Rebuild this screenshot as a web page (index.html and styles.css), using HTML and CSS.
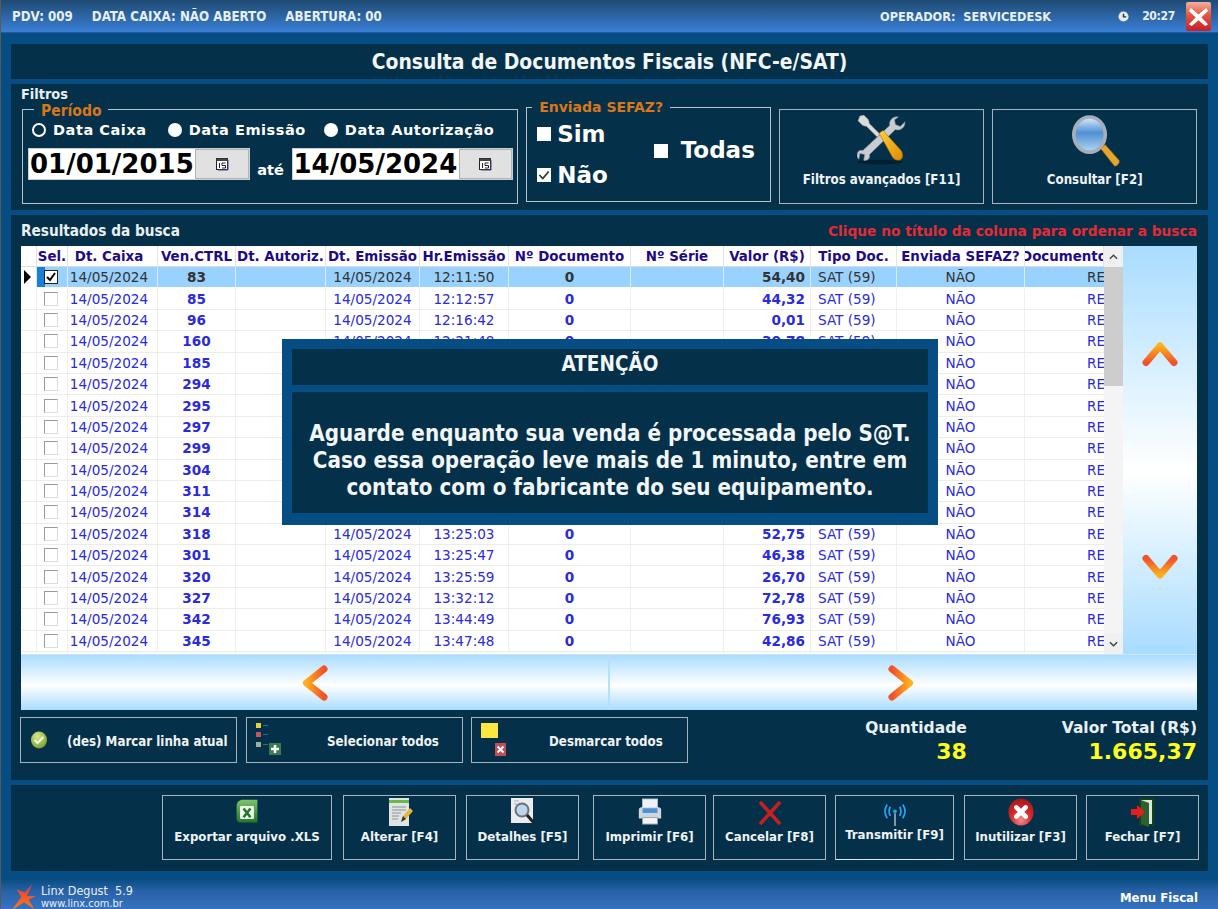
FILE: index.html
```html
<!DOCTYPE html>
<html lang="pt-BR">
<head>
<meta charset="utf-8">
<title>Consulta de Documentos Fiscais</title>
<link rel="stylesheet" href="styles.css">
</head>
<body>
<div class="app">
  <header class="topbar">
    <span class="tb-item">PDV: 009</span>
    <span class="tb-item">DATA CAIXA: NÃO ABERTO</span>
    <span class="tb-item">ABERTURA: 00</span>
    <span class="tb-oper">OPERADOR:&nbsp; SERVICEDESK</span>
    <svg class="tb-clock" viewBox="0 0 12 12"><circle cx="6" cy="6" r="5.5" fill="#e8e8ee"/><path d="M6 3v3.4h3" fill="none" stroke="#24344f" stroke-width="1.6"/></svg>
    <span class="tb-time">20:27</span>
    <button class="tb-close"><svg viewBox="0 0 24 24"><path d="M4 3l8 7 8-7 2 3-7 7 7 7-3 2-7-6-7 6-3-2 7-7-7-7z" fill="#fff"/></svg></button>
  </header>

  <main class="content">
    <section class="panel title-panel"><h1>Consulta de Documentos Fiscais (NFC-e/SAT)</h1></section>

    <section class="panel filters">
      <div class="filters-label">Filtros</div>
      <div class="filters-row">
        <fieldset class="fs fs-period">
          <legend>Período</legend>
          <div class="radios">
            <span class="radio"><i class="dot on"></i>Data Caixa</span>
            <span class="radio"><i class="dot"></i>Data Emissão</span>
            <span class="radio"><i class="dot"></i>Data Autorização</span>
          </div>
          <div class="dates">
            <div class="date"><span class="date-val">01/01/2015</span><span class="date-btn"><svg viewBox="0 0 14 14"><rect x="1.5" y="1.5" width="11" height="11" fill="#fff" stroke="#222"/><rect x="1.5" y="1.5" width="11" height="2.5" fill="#444"/><path d="M4.5 6v5M7 6h3.5M7 6v2.5h3.5V11H7" fill="none" stroke="#222"/><path d="M13 3v10H3" fill="none" stroke="#448"/></svg></span></div>
            <span class="ate">até</span>
            <div class="date"><span class="date-val">14/05/2024</span><span class="date-btn"><svg viewBox="0 0 14 14"><rect x="1.5" y="1.5" width="11" height="11" fill="#fff" stroke="#222"/><rect x="1.5" y="1.5" width="11" height="2.5" fill="#444"/><path d="M4.5 6v5M7 6h3.5M7 6v2.5h3.5V11H7" fill="none" stroke="#222"/><path d="M13 3v10H3" fill="none" stroke="#448"/></svg></span></div>
          </div>
        </fieldset>
        <fieldset class="fs fs-sefaz">
          <legend>Enviada SEFAZ?</legend>
          <div class="sefaz-col">
            <span class="opt"><i class="sq"></i>Sim</span>
            <span class="opt"><i class="sq chk"><svg viewBox="0 0 12 12"><path d="M2 6l3 3 5-6" fill="none" stroke="#333" stroke-width="1.5"/></svg></i>Não</span>
          </div>
          <span class="opt opt-all"><i class="sq"></i>Todas</span>
        </fieldset>
        <button class="fbtn fbtn-a">
          <svg class="ic-tools" viewBox="0 0 52 52">
            <defs><linearGradient id="yel" x1="0" y1="0" x2="1" y2="1"><stop offset="0" stop-color="#ffd23a"/><stop offset="1" stop-color="#e08a00"/></linearGradient></defs>
            <ellipse cx="24" cy="49" rx="24" ry="2.5" fill="#02202f"/>
            <path d="M43 2c-5-1-10 3-9 9L6 37c-3-1-6 1-6 5 0 2 1 3 2 4l1-6 5 1-1 6c4 1 7-2 6-6l27-26c5 2 10-2 10-8l-5 5-5-2-1-5z" fill="#c9ccd0" stroke="#8a8d92" stroke-width=".6"/>
            <path d="M3 1l4-1 5 5 1 4 11 11-3 3L10 12 6 11 1 6z" fill="#d9dbde" stroke="#888" stroke-width=".5"/>
            <path d="M23 19l4-3 18 20c3 3 3 8 1 10s-7 1-9-2z" fill="url(#yel)" stroke="#a86a00" stroke-width=".6"/>
          </svg>
          <span>Filtros avançados [F11]</span>
        </button>
        <button class="fbtn fbtn-b">
          <svg class="ic-search" viewBox="0 0 52 56">
            <defs>
              <linearGradient id="gl" x1="0" y1="0" x2="0" y2="1"><stop offset="0" stop-color="#dff0ff"/><stop offset=".45" stop-color="#4f8fd2"/><stop offset="1" stop-color="#b4d8f2"/></linearGradient>
            </defs>
            <path d="M31 36l5-4 15 17c1 3-3 7-5 6z" fill="#e6a52c" stroke="#a87614" stroke-width=".7"/>
            <ellipse cx="19" cy="21" rx="17" ry="19" fill="url(#gl)" stroke="#a6aeba" stroke-width="4"/>
          </svg>
          <span>Consultar [F2]</span>
        </button>
      </div>
    </section>

    <section class="panel results">
      <div class="res-head">
        <h2>Resultados da busca</h2>
        <span class="res-hint">Clique no título da coluna para ordenar a busca</span>
      </div>
      <div class="res-main">
        <div class="grid">
          <div class="g-row g-head">
            <span></span><span>Sel.</span><span>Dt. Caixa</span><span>Ven.CTRL</span><span>Dt. Autoriz.</span><span>Dt. Emissão</span><span>Hr.Emissão</span><span>Nº Documento</span><span>Nº Série</span><span>Valor (R$)</span><span>Tipo Doc.</span><span>Enviada SEFAZ?</span><span>Documento</span>
          </div>
          <div class="g-row sel"><span class="ptr"><i class="tri"></i></span><span class="c-sel"><i class="cb on"><svg viewBox="0 0 12 12"><path d="M2 6l3 3 5-7" fill="none" stroke="#000" stroke-width="2"/></svg></i></span><span>14/05/2024</span><span class="b">83</span><span></span><span>14/05/2024</span><span>12:11:50</span><span class="b">0</span><span></span><span class="b r">54,40</span><span class="l">SAT (59)</span><span>NÃO</span><span class="d">RE</span></div>
          <div class="g-row"><span></span><span class="c-sel"><i class="cb"></i></span><span>14/05/2024</span><span class="b">85</span><span></span><span>14/05/2024</span><span>12:12:57</span><span class="b">0</span><span></span><span class="b r">44,32</span><span class="l">SAT (59)</span><span>NÃO</span><span class="d">RE</span></div>
          <div class="g-row"><span></span><span class="c-sel"><i class="cb"></i></span><span>14/05/2024</span><span class="b">96</span><span></span><span>14/05/2024</span><span>12:16:42</span><span class="b">0</span><span></span><span class="b r">0,01</span><span class="l">SAT (59)</span><span>NÃO</span><span class="d">RE</span></div>
          <div class="g-row"><span></span><span class="c-sel"><i class="cb"></i></span><span>14/05/2024</span><span class="b">160</span><span></span><span>14/05/2024</span><span>12:21:48</span><span class="b">0</span><span></span><span class="b r">30,78</span><span class="l">SAT (59)</span><span>NÃO</span><span class="d">RE</span></div>
          <div class="g-row"><span></span><span class="c-sel"><i class="cb"></i></span><span>14/05/2024</span><span class="b">185</span><span></span><span></span><span></span><span></span><span></span><span></span><span></span><span>NÃO</span><span class="d">RE</span></div>
          <div class="g-row"><span></span><span class="c-sel"><i class="cb"></i></span><span>14/05/2024</span><span class="b">294</span><span></span><span></span><span></span><span></span><span></span><span></span><span></span><span>NÃO</span><span class="d">RE</span></div>
          <div class="g-row"><span></span><span class="c-sel"><i class="cb"></i></span><span>14/05/2024</span><span class="b">295</span><span></span><span></span><span></span><span></span><span></span><span></span><span></span><span>NÃO</span><span class="d">RE</span></div>
          <div class="g-row"><span></span><span class="c-sel"><i class="cb"></i></span><span>14/05/2024</span><span class="b">297</span><span></span><span></span><span></span><span></span><span></span><span></span><span></span><span>NÃO</span><span class="d">RE</span></div>
          <div class="g-row"><span></span><span class="c-sel"><i class="cb"></i></span><span>14/05/2024</span><span class="b">299</span><span></span><span></span><span></span><span></span><span></span><span></span><span></span><span>NÃO</span><span class="d">RE</span></div>
          <div class="g-row"><span></span><span class="c-sel"><i class="cb"></i></span><span>14/05/2024</span><span class="b">304</span><span></span><span></span><span></span><span></span><span></span><span></span><span></span><span>NÃO</span><span class="d">RE</span></div>
          <div class="g-row"><span></span><span class="c-sel"><i class="cb"></i></span><span>14/05/2024</span><span class="b">311</span><span></span><span></span><span></span><span></span><span></span><span></span><span></span><span>NÃO</span><span class="d">RE</span></div>
          <div class="g-row"><span></span><span class="c-sel"><i class="cb"></i></span><span>14/05/2024</span><span class="b">314</span><span></span><span></span><span></span><span></span><span></span><span></span><span></span><span>NÃO</span><span class="d">RE</span></div>
          <div class="g-row"><span></span><span class="c-sel"><i class="cb"></i></span><span>14/05/2024</span><span class="b">318</span><span></span><span>14/05/2024</span><span>13:25:03</span><span class="b">0</span><span></span><span class="b r">52,75</span><span class="l">SAT (59)</span><span>NÃO</span><span class="d">RE</span></div>
          <div class="g-row"><span></span><span class="c-sel"><i class="cb"></i></span><span>14/05/2024</span><span class="b">301</span><span></span><span>14/05/2024</span><span>13:25:47</span><span class="b">0</span><span></span><span class="b r">46,38</span><span class="l">SAT (59)</span><span>NÃO</span><span class="d">RE</span></div>
          <div class="g-row"><span></span><span class="c-sel"><i class="cb"></i></span><span>14/05/2024</span><span class="b">320</span><span></span><span>14/05/2024</span><span>13:25:59</span><span class="b">0</span><span></span><span class="b r">26,70</span><span class="l">SAT (59)</span><span>NÃO</span><span class="d">RE</span></div>
          <div class="g-row"><span></span><span class="c-sel"><i class="cb"></i></span><span>14/05/2024</span><span class="b">327</span><span></span><span>14/05/2024</span><span>13:32:12</span><span class="b">0</span><span></span><span class="b r">72,78</span><span class="l">SAT (59)</span><span>NÃO</span><span class="d">RE</span></div>
          <div class="g-row"><span></span><span class="c-sel"><i class="cb"></i></span><span>14/05/2024</span><span class="b">342</span><span></span><span>14/05/2024</span><span>13:44:49</span><span class="b">0</span><span></span><span class="b r">76,93</span><span class="l">SAT (59)</span><span>NÃO</span><span class="d">RE</span></div>
          <div class="g-row"><span></span><span class="c-sel"><i class="cb"></i></span><span>14/05/2024</span><span class="b">345</span><span></span><span>14/05/2024</span><span>13:47:48</span><span class="b">0</span><span></span><span class="b r">42,86</span><span class="l">SAT (59)</span><span>NÃO</span><span class="d">RE</span></div>
        </div>
        <div class="scroll">
          <span class="sb-btn"><svg viewBox="0 0 10 6"><path d="M1 5l4-4 4 4" fill="none" stroke="#444" stroke-width="1.6"/></svg></span>
          <span class="sb-thumb"></span>
          <span class="sb-track"></span>
          <span class="sb-btn"><svg viewBox="0 0 10 6"><path d="M1 1l4 4 4-4" fill="none" stroke="#444" stroke-width="1.6"/></svg></span>
        </div>
        <div class="vnav">
          <svg class="arrow" viewBox="0 0 36 26"><defs><linearGradient id="au" x1="0" y1="0" x2="0" y2="1"><stop offset="0" stop-color="#ffb01c"/><stop offset="1" stop-color="#f0522a"/></linearGradient></defs><path d="M4 21.500L18 5l14 16.500" fill="none" stroke="url(#au)" stroke-width="7" stroke-linecap="round" stroke-linejoin="round"/></svg>
          <svg class="arrow" viewBox="0 0 36 26"><defs><linearGradient id="ad" x1="0" y1="1" x2="0" y2="0"><stop offset="0" stop-color="#ffb01c"/><stop offset="1" stop-color="#f0522a"/></linearGradient></defs><path d="M4 4.500L18 21 32 4.500" fill="none" stroke="url(#ad)" stroke-width="7" stroke-linecap="round" stroke-linejoin="round"/></svg>
        </div>
      </div>
      <div class="hnav">
        <div class="hnav-cell">
          <svg class="arrow-h" viewBox="0 0 26 36"><defs><linearGradient id="al" x1="0" y1="0" x2="1" y2="0"><stop offset="0" stop-color="#ffb01c"/><stop offset="1" stop-color="#f0522a"/></linearGradient></defs><path d="M22 4L4.500 18 22 32" fill="none" stroke="url(#al)" stroke-width="7" stroke-linecap="round" stroke-linejoin="round"/></svg>
        </div>
        <div class="hnav-cell">
          <svg class="arrow-h" viewBox="0 0 26 36"><defs><linearGradient id="ar" x1="1" y1="0" x2="0" y2="0"><stop offset="0" stop-color="#ffb01c"/><stop offset="1" stop-color="#f0522a"/></linearGradient></defs><path d="M4 4L21.500 18 4 32" fill="none" stroke="url(#ar)" stroke-width="7" stroke-linecap="round" stroke-linejoin="round"/></svg>
        </div>
      </div>
      <div class="res-foot">
        <button class="abtn a1">
          <svg class="ai" viewBox="0 0 20 20"><defs><radialGradient id="gr" cx=".4" cy=".3" r=".8"><stop offset="0" stop-color="#d6e88a"/><stop offset="1" stop-color="#6e9a22"/></radialGradient></defs><ellipse cx="10" cy="10" rx="8" ry="8.500" fill="url(#gr)"/><path d="M5.500 10l3 3 6-6" fill="none" stroke="#f4f8ec" stroke-width="2"/></svg>
          <span>(des) Marcar linha atual</span>
        </button>
        <button class="abtn a2">
          <svg class="ai2" viewBox="0 0 30 36"><rect x="1" y="1" width="5" height="5" fill="#e3d23a"/><rect x="1" y="10" width="5" height="5" fill="#c0565e"/><rect x="1" y="20" width="5" height="5" fill="#9ab09a"/><path d="M8 3.500h5M8 12.500h5M8 22.500h5" stroke="#4b6472" stroke-width="1"/><rect x="14" y="21" width="12" height="12" fill="#3a7a4e"/><path d="M20 23v8M16 27h8" stroke="#fff" stroke-width="2.500"/></svg>
          <span>Selecionar todos</span>
        </button>
        <button class="abtn a3">
          <svg class="ai2" viewBox="0 0 30 36"><rect x="1" y="1" width="17" height="15" fill="#fde640"/><rect x="15" y="21" width="11" height="13" fill="#c84a55"/><path d="M17.500 24.500l6 6M23.500 24.500l-6 6" stroke="#fff" stroke-width="2"/></svg>
          <span>Desmarcar todos</span>
        </button>
        <div class="stat stat-q"><span class="stat-l">Quantidade</span><span class="stat-v">38</span></div>
        <div class="stat stat-t"><span class="stat-l">Valor Total (R$)</span><span class="stat-v">1.665,37</span></div>
      </div>
    </section>

    <section class="panel actions">
      <button class="btn w-xls">
        <svg class="bi" viewBox="0 0 26 30"><defs><linearGradient id="xg" x1="0" y1="0" x2="0" y2="1"><stop offset="0" stop-color="#7cc36a"/><stop offset="1" stop-color="#1f7a26"/></linearGradient></defs><path d="M7 1h18v26H4q-3-1-3-4V7q1-5 6-6z" fill="url(#xg)"/><rect x="5" y="8" width="16" height="15" rx="1" fill="#f2f8ee"/><path d="M9 11l8 10M17 11l-8 10" stroke="#1f7a26" stroke-width="3"/></svg>
        <span>Exportar arquivo .XLS</span>
      </button>
      <button class="btn w-f4">
        <svg class="bi" viewBox="0 0 26 30"><rect x="2" y="1" width="20" height="28" fill="#dfe3e3"/><rect x="2" y="3" width="20" height="3" fill="#6bb84a"/><path d="M5 10h14M5 13h14M5 16h9M5 19h7M5 22h6" stroke="#8a9296"/><path d="M14 25l2-6 7-8 3 3-7 8z" fill="#eeb23a"/><path d="M14 25l2-6 3 3z" fill="#333"/></svg>
        <span>Alterar [F4]</span>
      </button>
      <button class="btn w-f5">
        <svg class="bi" viewBox="0 0 26 30"><rect x="1" y="1" width="22" height="25" fill="#e9edf0"/><path d="M4 4h5M4 7h3" stroke="#aab"/><circle cx="12" cy="13" r="6.500" fill="#bcd6ee" stroke="#6d7278" stroke-width="2"/><path d="M17 18l7 8" stroke="#222" stroke-width="3"/></svg>
        <span>Detalhes [F5]</span>
      </button>
      <button class="btn w-f6">
        <svg class="bi" viewBox="0 0 28 30"><rect x="6" y="1" width="16" height="11" fill="#eef1f5" stroke="#bcc3cc"/><path d="M2 13q0-3 3-3h18q3 0 3 3v9H2z" fill="#cfd6de"/><rect x="6" y="11" width="16" height="5" fill="#4e8fdc"/><rect x="6" y="21" width="16" height="7" fill="#f4f4f4" stroke="#9aa2ab"/></svg>
        <span>Imprimir [F6]</span>
      </button>
      <button class="btn w-f8">
        <svg class="bi" viewBox="0 0 26 30"><path d="M3 5l20 22M23 5L3 27" stroke="#c8201e" stroke-width="3.500"/></svg>
        <span>Cancelar [F8]</span>
      </button>
      <button class="btn w-f9 tx">
        <svg class="bi2" viewBox="0 0 24 26"><path d="M12 11v14" stroke="#b8c8d0" stroke-width="1.500"/><circle cx="12" cy="9" r="2" fill="#24a8f0"/><path d="M7 4q-3 5 0 10M17 4q3 5 0 10M3.500 1.500q-5 7.500 0 15M20.500 1.500q5 7.500 0 15" fill="none" stroke="#24a8f0" stroke-width="1.800"/></svg>
        <span>Transmitir [F9]</span>
      </button>
      <button class="btn w-f3">
        <svg class="bi" viewBox="0 0 28 30"><defs><radialGradient id="rd" cx=".5" cy=".8" r=".8"><stop offset="0" stop-color="#f09090"/><stop offset=".5" stop-color="#d42a2a"/><stop offset="1" stop-color="#a81616"/></radialGradient></defs><ellipse cx="14" cy="15" rx="13.500" ry="14.500" fill="url(#rd)"/><path d="M9 10l10 10M19 10L9 20" stroke="#fff" stroke-width="5" stroke-linecap="round"/></svg>
        <span>Inutilizar [F3]</span>
      </button>
      <button class="btn w-f7">
        <svg class="bi" viewBox="0 0 26 30"><rect x="9" y="1" width="15" height="28" fill="#16401c"/><path d="M11 3h11v24H11z" fill="#dfe6da"/><path d="M11 3l8 3v24l-8-3z" fill="#2e5f2e"/><path d="M1 12h6V8l8 7-8 7v-4H1z" fill="#e81c1c"/></svg>
        <span>Fechar [F7]</span>
      </button>
    </section>
  </main>

  <footer class="bottombar">
    <svg class="logo" viewBox="0 0 26 28"><defs><linearGradient id="lg" x1="0" y1="0" x2="0" y2="1"><stop offset="0" stop-color="#f5303a"/><stop offset="1" stop-color="#f08018"/></linearGradient></defs><path d="M22 0L14 9 5 6l5 8L0 28l13-8 11 7-6-10 8-4H16z" fill="url(#lg)"/></svg>
    <div class="brand"><span class="brand-n">Linx Degust&nbsp; 5.9</span><span class="brand-u">www.linx.com.br</span></div>
    <span class="menu-f">Menu Fiscal</span>
  </footer>

  <div class="modal">
    <div class="modal-title">ATENÇÃO</div>
    <div class="modal-body">Aguarde enquanto sua venda é processada pelo S@T.<br>Caso essa operação leve mais de 1 minuto, entre em<br>contato com o fabricante do seu equipamento.</div>
  </div>
</div>
</body>
</html>
```
FILE: styles.css
```css
* { box-sizing: border-box; }
html, body { margin: 0; padding: 0; }
body { width: 1218px; height: 909px; overflow: hidden; font-family: "DejaVu Sans", Verdana, sans-serif; color: #fff; }
button { font: inherit; color: inherit; background: none; padding: 0; cursor: pointer; }
h1, h2 { margin: 0; }

.app { position: relative; width: 1218px; height: 909px; display: flex; flex-direction: column; background: #054d82; border-left: 1px solid #5a5a5a; }

.topbar { height: 33px; flex: none; display: flex; align-items: center; padding: 0 7px 0 11px; background: linear-gradient(#1e4a72, #2f6aae 60%, #3b7fd6); border-bottom: 1px solid #1e5c9c; font-family: "DejaVu Sans Condensed", "DejaVu Sans", sans-serif; font-weight: 700; font-size: 13.2px; color: #e8f0f6; }
.tb-item { margin-right: 19px; }
.tb-oper { margin-left: auto; margin-right: 67px; font-size: 12.6px; }
.tb-clock { width: 11px; height: 11px; margin-right: 13px; }
.tb-time { margin-right: 11px; font-size: 12px; letter-spacing: -.3px; }
.tb-close { width: 25px; height: 29px; border: 0; border-radius: 2px; background: linear-gradient(#f3b0a0, #e4573f 45%, #c4202a); display: flex; align-items: center; justify-content: center; }
.tb-close svg { width: 23px; height: 23px; }

.content { flex: 1; display: flex; flex-direction: column; gap: 5px; padding: 11px 10px 0 10px; }
.panel { background: #053049; }

.title-panel { height: 35px; flex: none; display: flex; align-items: center; justify-content: center; }
h1 { font-size: 20.9px; font-weight: 700; font-family: "DejaVu Sans Condensed", "DejaVu Sans", sans-serif; color: #f2f6f8; }

.filters { height: 126px; flex: none; padding: 2px 11px 0 11px; }
.filters-label { margin-left: -1px; font-family: "DejaVu Sans Condensed", "DejaVu Sans", sans-serif; font-size: 14.4px; font-weight: 700; line-height: 16px; color: #e8f0f4; }
.filters-row { display: flex; align-items: flex-start; gap: 8px; }
.fs { margin: 0; padding: 0; border: 1px solid #b9c4ca; min-width: 0; }
.fs legend { font-weight: 700; color: #d9761a; }
.fs-period { width: 497px; height: 104px; margin-top: -2px; padding: 0 4px 0 5px; }
.fs-period legend { margin-left: 6px; padding: 4px 7px 0; font-family: "DejaVu Sans Condensed", "DejaVu Sans", sans-serif; font-size: 15.5px; line-height: 15px; }
.radios { display: flex; align-items: center; height: 20px; margin-top: 1px; padding-left: 4px; font-size: 14.5px; font-weight: 700; letter-spacing: .55px; }
.radio { display: flex; align-items: center; gap: 7px; }
.radio:nth-child(2) { margin-left: 21px; }
.radio:nth-child(3) { margin-left: 18px; }
.dot { width: 14px; height: 14px; border-radius: 50%; background: #fff; display: block; }
.dot.on { border: 2.5px solid #fff; background: #053049; }
.dates { display: flex; align-items: flex-end; margin-top: 8px; }
.date { width: 222px; height: 32px; display: flex; align-items: stretch; background: #fff; border: 1px solid #c8ced2; color: #000; }
.date-val { width: 166px; padding-left: 1px; font-size: 26px; line-height: 30px; font-weight: 700; white-space: nowrap; }
.date-btn { flex: 1; display: flex; align-items: center; justify-content: center; background: #e1e1e1; border: 1px solid #b4b4b4; }
.date-btn svg { width: 14px; height: 14px; }
.ate { width: 42px; text-align: center; font-size: 14.5px; font-weight: 700; line-height: 20px; }

.fs-sefaz { width: 245px; height: 102px; margin-top: -2px; padding: 0 0 0 10px; display: flex; align-items: center; }
.fs-sefaz legend { margin-left: -5px; padding: 0 7px; font-size: 14px; line-height: 15px; }
.sefaz-col { display: flex; flex-direction: column; gap: 16px; margin-top: -7px; }
.opt { display: flex; align-items: center; gap: 6px; font-size: 23px; line-height: 25px; font-weight: 700; }
.opt-all { margin-left: 46px; margin-top: -15px; gap: 13px; }
.sq { width: 14px; height: 14px; background: #fff; display: block; }
.sq svg { display: block; width: 14px; height: 14px; }

.fbtn { height: 95px; border: 1px solid #a8b4ba; background: #053049; display: flex; flex-direction: column; align-items: center; justify-content: flex-end; padding-bottom: 16px; font-family: "DejaVu Sans Condensed", "DejaVu Sans", sans-serif; font-weight: 700; font-size: 13.2px; color: #eef3f6; margin-top: 7px; }
.fbtn-a { width: 206px; }
.fbtn-b { width: 205px; }
.ic-tools { width: 50px; height: 50px; margin-bottom: 7px; }
.ic-search { width: 48px; height: 52px; margin-bottom: 5px; margin-left: 2px; }

.results { height: 565px; flex: none; padding: 0 11px 0 10px; display: flex; flex-direction: column; }
.res-head { height: 31px; flex: none; display: flex; align-items: center; justify-content: space-between; padding-top: 1px; }
h2 { font-size: 15.2px; font-weight: 700; font-family: "DejaVu Sans Condensed", "DejaVu Sans", sans-serif; color: #e8f0f4; }
.res-hint { font-size: 13.75px; font-weight: 700; color: #e62a35; }

.res-main { display: flex; height: 408px; flex: none; background: linear-gradient(#a9dcff, #d8f0ff 30%, #fff 55%, #d8f0ff 75%, #a9dcff); }
.grid { width: 1083px; flex: none; background: #fff; font-size: 13.6px; color: #2a2ae0; }
.g-row { display: grid; grid-template-columns: 16px 31px 90px 78px 90px 94px 89px 122px 93px 87px 86px 128px 79px; height: 21.4px; border-bottom: 1px solid #ececec; background: #fff; }
.g-row > span { display: flex; align-items: center; justify-content: center; white-space: nowrap; overflow: hidden; border-right: 1px solid #efefef; min-width: 0; }
.g-row > span:nth-child(3) { padding-right: 7px; }
.g-head { height: 21px; font-weight: 700; color: #1e0a86; font-size: 13.4px; border-bottom: 1px solid #dcdcdc; }
.g-head > span { border-right: 1px solid #e4e4e4; }
.g-row .b { font-weight: 700; }
.g-row .r { justify-content: flex-end; padding-right: 5px; }
.g-row .l { justify-content: flex-start; padding-left: 7px; }
.g-row .d { justify-content: flex-start; padding-left: 62px; border-right: 0; }
.g-row.sel { background: #99d1ff; color: #333; border-bottom-color: #fff; }
.g-row.sel > span { border-right-color: #d5ecff; }
.g-row.sel .ptr { background: #fff; }
.tri { width: 0; height: 0; margin-right: 3px; border-left: 7px solid #000; border-top: 7px solid transparent; border-bottom: 7px solid transparent; display: block; }
.g-row.sel .c-sel { background: linear-gradient(90deg, #1a7fd6 8px, #99d1ff 8px); }
.c-sel { padding-right: 3px; }
.cb { width: 14px; height: 14px; border: 1px solid #9a9a9a; border-right-color: #ddd; border-bottom-color: #ddd; background: #fff; display: block; }
.cb.on { border: 1px solid #222; }
.cb svg { display: block; width: 12px; height: 12px; }

.scroll { width: 19px; flex: none; display: flex; flex-direction: column; background: #f0f0f0; }
.sb-btn { height: 21px; flex: none; display: flex; align-items: center; justify-content: center; }
.sb-btn svg { width: 9px; height: 6px; }
.sb-thumb { height: 119px; flex: none; background: #cdcdcd; }
.sb-track { flex: 1; background: #f4f4f4; }

.vnav { flex: 1; display: flex; flex-direction: column; align-items: center; padding-top: 95px; gap: 187px; }
.arrow { width: 36px; height: 26px; }

.hnav { flex: none; display: grid; grid-template-columns: 589px 1fr; border-top: 1px solid #c9e8ff; height: 56px; }
.hnav-cell { display: flex; align-items: center; justify-content: center; background: linear-gradient(#a9dcff, #fff 55%, #a9dcff); }
.hnav-cell:first-child { border-right: 2px solid #b6e0fb; justify-content: flex-start; padding-left: 281px; }
.hnav-cell:last-child { justify-content: flex-start; padding-left: 278px; }
.arrow-h { width: 26px; height: 36px; }

.res-foot { flex: 1; display: flex; align-items: flex-start; padding-top: 7px; margin-left: -1px; }
.abtn { height: 46px; width: 217px; flex: none; border: 1px solid #a8b4ba; display: flex; align-items: center; font-family: "DejaVu Sans Condensed", "DejaVu Sans", sans-serif; font-weight: 700; font-size: 13.2px; color: #eef3f6; background: #053049; margin-right: 9px; padding-left: 8px; }
.abtn span { padding-top: 2px; }
.a1 span { margin-left: 18px; white-space: nowrap; }
.a2 span { margin-left: 42px; }
.a3 { margin-left: -1px; }
.a3 span { margin-left: 39px; }
.ai { width: 20px; height: 20px; }
.ai2 { width: 30px; height: 36px; flex: none; }
.stat { display: flex; flex-direction: column; align-items: flex-end; font-weight: 700; }
.stat-q { margin-left: auto; margin-right: 95px; }
.stat-l { font-size: 15.5px; line-height: 22px; color: #e8f0f4; }
.stat-v { font-size: 22px; line-height: 26px; color: #ffff1a; }

.actions { height: 86px; flex: none; display: flex; align-items: flex-start; padding: 10px 8px 0 0; }
.btn { height: 65px; margin-right: 10px; border: 1px solid #a8b4ba; background: #053049; display: flex; flex-direction: column; align-items: center; justify-content: flex-end; padding-bottom: 15px; font-family: "DejaVu Sans Condensed", "DejaVu Sans", sans-serif; font-weight: 700; font-size: 13.1px; color: #eef3f6; flex: none; }
.bi { width: 26px; height: 30px; flex: none; margin-bottom: 2px; }
.bi2 { width: 22px; height: 24px; flex: none; margin-bottom: 0; }
.w-xls { width: 170px; margin-left: 151px; margin-right: 11px; }
.w-xls .bi { width: 24px; height: 26px; margin-bottom: 4px; }
.w-f4 { width: 113px; }
.w-f5 { width: 113px; margin-right: 14px; }
.w-f6 { width: 113px; margin-right: 7px; }
.w-f8 { width: 113px; margin-right: 9px; }
.w-f9 { width: 119px; border-bottom-color: #dfe6ea; padding-bottom: 17px; }
.w-f3 { width: 113px; margin-right: 9px; }
.w-f7 { width: 113px; margin-right: 0; }

.bottombar { height: 29px; flex: none; margin-top: 9px; display: flex; align-items: center; padding: 0 20px 0 11px; overflow: hidden; background: linear-gradient(#0a4f84, #2a62a8 40%, #3572c0); }
.logo { width: 24px; height: 26px; margin-top: 4px; flex: none; }
.brand { display: flex; flex-direction: column; margin-left: 5px; padding-top: 4px; font-family: "DejaVu Sans Condensed", "DejaVu Sans", sans-serif; color: #e8f0f6; }
.brand-n { font-size: 12.5px; line-height: 14px; }
.brand-u { font-size: 11px; line-height: 12px; }
.menu-f { margin-left: auto; font-family: "DejaVu Sans Condensed", "DejaVu Sans", sans-serif; font-size: 13px; font-weight: 700; margin-top: 6px; }

.modal { position: absolute; left: 281px; top: 339px; width: 656px; height: 186px; background: #054d82; padding: 10px 10px 12px; display: flex; flex-direction: column; gap: 7px; }
.modal-title { height: 36px; flex: none; background: #053049; display: flex; align-items: center; justify-content: center; padding-bottom: 6px; font-family: "DejaVu Sans Condensed", "DejaVu Sans", sans-serif; font-weight: 700; font-size: 20.5px; color: #f2f6f8; }
.modal-body { flex: 1; background: #053049; display: flex; align-items: center; justify-content: center; text-align: center; padding-top: 16px; font-family: "DejaVu Sans Condensed", "DejaVu Sans", sans-serif; font-weight: 700; font-size: 22.2px; line-height: 27px; color: #f2f6f8; }
```
